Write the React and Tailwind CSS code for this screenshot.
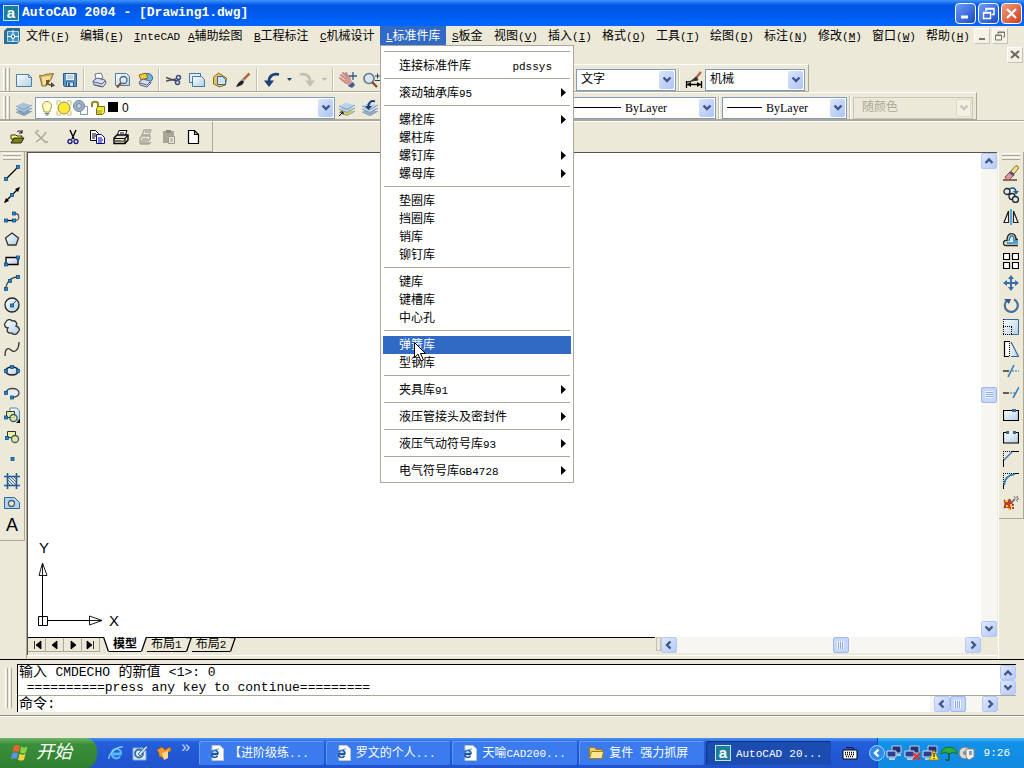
import { useState } from "react";

const menus = [
  { text: "文件", suffix: "F" },
  { text: "编辑", suffix: "E" },
  { text: "nteCAD", prefix: "I" },
  { text: "辅助绘图", prefix: "A", wide: true },
  { text: "工程标注", prefix: "B", wide: true },
  { text: "机械设计", prefix: "C", wide: true },
  { text: "标准件库", prefix: "L", wide: true, open: true },
  { text: "板金", prefix: "S", narrow: true },
  { text: "视图", suffix: "V" },
  { text: "插入", suffix: "I" },
  { text: "格式", suffix: "O" },
  { text: "工具", suffix: "T" },
  { text: "绘图", suffix: "D" },
  { text: "标注", suffix: "N" },
  { text: "修改", suffix: "M" },
  { text: "窗口", suffix: "W" },
  { text: "帮助", suffix: "H" },
];

const libraryGroups = [
  [{ text: "连接标准件库", hint: "pdssys" }],
  [{ text: "滚动轴承库95", sub: true }],
  [
    { text: "螺栓库", sub: true },
    { text: "螺柱库" },
    { text: "螺钉库", sub: true },
    { text: "螺母库", sub: true },
  ],
  [{ text: "垫圈库" }, { text: "挡圈库" }, { text: "销库" }, { text: "铆钉库" }],
  [{ text: "键库" }, { text: "键槽库" }, { text: "中心孔" }],
  [{ text: "弹簧库", active: true }, { text: "型钢库" }],
  [{ text: "夹具库91", sub: true }],
  [{ text: "液压管接头及密封件", sub: true }],
  [{ text: "液压气动符号库93", sub: true }],
  [{ text: "电气符号库GB4728", sub: true }],
];

// Latin runs are set one size smaller so they sit well beside the Chinese glyphs
function T({ children }) {
  return children.split(/([\x21-\x7e]+)/).map((part, i) =>
    i % 2 ? (
      <span key={i} className="text-[11px]">
        {part}
      </span>
    ) : (
      part
    )
  );
}

function Svg({ w = 16, h = 16, children }) {
  return (
    <svg width={w} height={h} viewBox={`0 0 ${w} ${h}`} fill="none" className="shrink-0" aria-hidden="true">
      {children}
    </svg>
  );
}

const Dot = ({ x, y }) => (
  <rect x={x - 1.5} y={y - 1.5} width="3" height="3" fill="#2288cc" stroke="#0d4f86" strokeWidth="0.8" />
);

const Chevron = ({ dir = "down", color = "#3f5687" }) => {
  const paths = {
    down: "M1.5 2.5 5 6 8.5 2.5",
    up: "M1.5 7 5 3.5 8.5 7",
    left: "M6.5 1.5 3 5 6.5 8.5",
    right: "M3.5 1.5 7 5 3.5 8.5",
  };
  return (
    <Svg w={10} h={10}>
      <path d={paths[dir]} stroke={color} strokeWidth="2.4" />
    </Svg>
  );
};

/* ---------- standard toolbar icons ---------- */

const PaperIcon = () => (
  <Svg w={18}>
    <path d="M1.5 2.5h12l3 3v9h-15z" fill="url(#paper)" stroke="#4d7fa8" />
    <path d="M13.5 2.5v3h3" stroke="#4d7fa8" strokeWidth="0.8" />
  </Svg>
);
const OpenIcon = () => (
  <Svg w={18}>
    <path d="M1.500 3.500h4l1-1 9-1-2.500 6-5 6.500H4z" fill="#d9b45a" stroke="#8a7436" />
    <path d="m4 5 9-1-4 9H5z" fill="#f3e2a4" />
    <path d="M9 8c-1 4 2 5 5 5M8 13l3-5" stroke="#6b5322" strokeWidth="1.600" />
    <path d="m13 10 4 3.500-4 2z" fill="#4a4436" />
  </Svg>
);
const SaveIcon = () => (
  <Svg>
    <path d="M1.5 1.5h13v13h-12l-1-1z" fill="#5b93c2" stroke="#2b5c8c" />
    <path d="M4 2h8v6H4z" fill="#e8f1f8" />
    <path d="M5 4h6M5 6h6" stroke="#8fb2cf" />
    <path d="M4.5 10h7v4.500h-7z" fill="#cfdfeb" stroke="#2b5c8c" />
    <path d="M6 11h2v3H6z" fill="#2b5c8c" />
  </Svg>
);
const PrintIcon = () => (
  <Svg>
    <path d="M5 8 4 2l6-1 2 5z" fill="#fff" stroke="#68789c" />
    <path d="m2 9 4-3 8 2 1 3-3 4-9-2z" fill="#d9dceb" stroke="#55618a" />
    <path d="m3 10 8 2 3-3M4 13l7 1.500" stroke="#55618a" />
  </Svg>
);
const PreviewIcon = () => (
  <Svg>
    <path d="M1.500 1.500h11l3 3v9h-14z" fill="url(#paper)" stroke="#4d7fa8" />
    <circle cx="9.500" cy="8" r="3.500" fill="#d8ecf8" stroke="#56697c" strokeWidth="1.300" />
    <path d="m7 11-4 4.500" stroke="#8c4a2b" strokeWidth="2.200" />
  </Svg>
);
const PublishIcon = () => (
  <Svg>
    <circle cx="11" cy="6" r="4.500" fill="#6fb8e2" stroke="#28669a" />
    <path d="M2 3 9 1l2 5-7 2z" fill="#f4c942" stroke="#8a6a14" />
    <path d="m2 10 4-3 7 2 1 2-4 4-7-2z" fill="#d9dceb" stroke="#55618a" />
    <path d="m3 11 7 2 3-3" stroke="#55618a" />
  </Svg>
);
const CutIcon = () => (
  <Svg>
    <path d="M0 5.500 10 9M0 9l10-2" stroke="#4a4f58" strokeWidth="1.500" />
    <circle cx="12.500" cy="5.500" r="2" stroke="#3a4c86" strokeWidth="1.500" />
    <circle cx="11.500" cy="10.500" r="2" stroke="#3a4c86" strokeWidth="1.500" />
  </Svg>
);
const CopyIcon = () => (
  <Svg>
    <path d="M.500 1.500h11v9H.500z" fill="#e3eff8" stroke="#3f7aa8" />
    <path d="M3.500 4.500h9l3 3v7h-12z" fill="url(#paper)" stroke="#3f7aa8" />
  </Svg>
);
const PasteIcon = () => (
  <Svg>
    <path d="m1.500 5 5-4 8 5-1 7-6 2-6-3z" fill="#e5c063" stroke="#8d6d22" />
    <path d="M5.500 4.500h5l3 3v5h-8z" fill="#cfe3f3" stroke="#35699a" />
  </Svg>
);
const BrushIcon = () => (
  <Svg>
    <path d="m14.500 1.500-6 6" stroke="#b06b3a" strokeWidth="2.500" />
    <path d="m9 7-3 3" stroke="#9aa0a8" strokeWidth="3" />
    <path d="M8 9c-3-1-5 2-7 6 4-1 7-2 8-5z" fill="#222" />
  </Svg>
);
const UndoIcon = ({ color = "#203f77", flip }) => (
  <Svg>
    <g transform={flip ? "translate(16 0) scale(-1 1)" : undefined}>
      <path d="M15 2.500C9 1 5 4 5 9.500" stroke={color} strokeWidth="2.800" />
      <path d="M0 8.500h10L5 15z" fill={color} />
    </g>
  </Svg>
);
const PanIcon = () => (
  <Svg w={18}>
    <path d="m2 3 6 5M1 6l6 5M4 1l6 6M7 1l4 6" stroke="#c98a86" strokeWidth="2" strokeLinecap="round" />
    <path d="m5 8 5-3 4 6-4 4z" fill="#d49a94" />
    <path d="m9 14 5-4 2 3-3 3z" fill="#3b5f95" />
    <path d="M14 0v8M10 4h8" stroke="#35598b" strokeWidth="1.300" />
  </Svg>
);
const ZoomIcon = () => (
  <Svg w={18}>
    <circle cx="7" cy="6.500" r="5" fill="#d7e6ef" stroke="#64778a" strokeWidth="1.600" />
    <path d="m10 10 5 5" stroke="#8c4a2b" strokeWidth="2.400" />
    <path d="M13 4h5M15.500 1.500v5M13 8.500h5" stroke="#26406e" />
  </Svg>
);
const DimStyleIcon = () => (
  <Svg w={18} h={18}>
    <path d="m16 1-5 6" stroke="#b06b3a" strokeWidth="2.400" />
    <path d="M11 6 5 11H1l6-1 6-1z" fill="#333" stroke="#333" />
    <path d="M1.500 10v7M16.500 10v7M2 13.500h14" stroke="#000" strokeWidth="1.300" />
    <path d="m2 13.500 4-2.500v5zM16 13.500l-4-2.500v5z" fill="#000" />
  </Svg>
);

/* ---------- layer icons ---------- */

const sheets = (top, bottom) => (
  <>
    <path d="m0 11.500 7-3.500 9 3-8 4.500z" fill={bottom} stroke="#eef3f8" strokeWidth="0.800" />
    <path d="m0 8.500 7-3.500 9 3-8 4.500z" fill={top} stroke="#eef3f8" strokeWidth="0.800" />
    <path d="M0 5.500 7 2l9 3-8 4.500z" fill={top} stroke="#eef3f8" strokeWidth="0.800" />
    <path d="m0 12 8 3.500 8-4.500M0 9l8 3.500L16 8M0 6l8 3.500L16 5" stroke="#5f7c9f" strokeWidth="0.800" />
  </>
);
const LayersIcon = () => <Svg>{sheets("#a9c2dc", "#7d9cbf")}</Svg>;
const LayerCurrentIcon = () => (
  <Svg>
    {sheets("#b9d2e8", "#e4cf35")}
    <path d="M0 16 4 12M1.500 12H4v2.500" stroke="#000" />
  </Svg>
);
const LayerPrevIcon = () => (
  <Svg>
    {sheets("#c2d4e6", "#8fa9c7")}
    <path d="M13 1.500C9 0 6 3 6.500 7" stroke="#203f77" strokeWidth="2" />
    <path d="M3 6h7l-3.500 4z" fill="#203f77" />
  </Svg>
);
const LayerStateIcons = () => (
  <span className="flex shrink-0 items-center gap-px">
    <Svg w={15}>
      <path d="M4 10C1 6 3 1.500 7 1.500S13 6 10 10v2H4z" fill="#fffbc0" stroke="#a39a3a" />
      <path d="M5 13.500h4M5.500 15h3" stroke="#6c6c6c" />
    </Svg>
    <Svg>
      <path d="M1 1h4M11 1h4v4M1 1v4M1 11v4h4M15 11v4h-4" stroke="#c9c14a" />
      <circle cx="8" cy="8" r="6" fill="#ffe93b" stroke="#8b8730" />
    </Svg>
    <Svg>
      <path d="M7.500 6.500h7v8h-7z" fill="#fff" stroke="#8198b0" />
      <circle cx="6" cy="6" r="5.500" fill="#9db3c4" stroke="#6f899e" />
      <circle cx="6" cy="6" r="2.500" fill="#c6d4de" stroke="#6f899e" />
    </Svg>
    <Svg>
      <path d="M2 7V4c0-3 6-3 6 0v4" stroke="#8f8a1a" strokeWidth="2" />
      <path d="m6.500 8.500 2-2h6v6l-2 2h-6z" fill="#f1e83c" stroke="#77730f" />
      <path d="M7 11h5M7 13h5" stroke="#a19b20" />
    </Svg>
    <Svg w={11} h={11}>
      <path d="M1 0h10v10H1z" fill="#000" />
    </Svg>
  </span>
);

/* ---------- small classic toolbar ---------- */

const classicTools = [
  {
    label: "打开图形",
    art: (
      <>
        <path d="M2 6h5l1 1h5v3H2z" fill="#ffff66" stroke="#333" />
        <path d="m2 14 3-5h10l-3 5z" fill="#808000" stroke="#222" />
        <path d="M8 3c2-2 4-1 5 1M13 1v3h-3" stroke="#000" />
      </>
    ),
  },
  { label: "删除", art: <path d="m2 3 11 11M13 3c-2 4-7 8-10 10M3 2h3M12 13h3" stroke="#aaa79a" strokeWidth="1.500" /> },
  {
    label: "剪切",
    art: (
      <>
        <path d="m5 1 4 9M11 1 7 10" stroke="#000" strokeWidth="1.400" />
        <circle cx="5" cy="12.500" r="2" stroke="#1a1a8c" strokeWidth="1.300" />
        <circle cx="11" cy="12.500" r="2" stroke="#1a1a8c" strokeWidth="1.300" />
      </>
    ),
  },
  {
    label: "复制",
    art: (
      <>
        <path d="M1.500 1.500h5l3 3v7h-8z" fill="#fff" stroke="#000" />
        <path d="M3 5h4M3 7h4M3 9h3" stroke="#000" />
        <path d="M7.500 5.500h5l3 3v6h-8z" fill="#fff" stroke="#00009c" />
        <path d="M9 9h4M9 11h5M9 13h4" stroke="#00009c" />
      </>
    ),
  },
  {
    label: "打印",
    art: (
      <>
        <path d="m4 7 2-5.500h8L12 7z" fill="#fff" stroke="#000" />
        <path d="M1 9l3-3h11v5l-3 3.500H1z" fill="#e4e0cf" stroke="#000" strokeWidth="1.400" />
        <path d="M1 9.500h11l3-3M12 9v5M2 12h9M7 4h4" stroke="#000" strokeWidth="1.200" />
        <path d="M8 11.500h2" stroke="#c8c800" />
      </>
    ),
  },
  {
    label: "打印设置",
    art: (
      <path d="M5 6 7 1h7l-2 5zM8 3h4M3 9l2-2h8v3l-2 2H3zM3 14l1 1h8l2-2M5 10h6M3 12v2h9" stroke="#aaa79a" strokeWidth="1.300" />
    ),
  },
  {
    label: "粘贴",
    art: (
      <>
        <path d="M2 2h11v12H2z" fill="#aaa79a" />
        <path d="M5 1h5v3H5z" fill="#8d8a7e" />
        <path d="M7.500 7.500h6v7h-6z" fill="#ece9d8" stroke="#9c998c" />
        <path d="M9 10h3M9 12h3" stroke="#9c998c" />
      </>
    ),
  },
  { label: "新建", art: <path d="M3.500 1.500h6l4 4v9h-10zM9.500 1.500v4h4" fill="#fff" stroke="#000" strokeWidth="1.200" /> },
];

/* ---------- draw toolbar ---------- */

const drawTools = [
  { label: "直线", art: <><path d="M2 14 14 2" stroke="#000" strokeWidth="1.300" /><Dot x={2} y={14} /><Dot x={14} y={2} /></> },
  {
    label: "构造线",
    art: (
      <>
        <path d="M1 15 15 1" stroke="#000" strokeWidth="1.300" />
        <path d="m0 16 2-5 3 3zM16 0l-2 5-3-3z" fill="#000" />
        <Dot x={8} y={8} />
      </>
    ),
  },
  {
    label: "多段线",
    art: (
      <>
        <path d="M2 11.500h9" stroke="#000" strokeWidth="1.300" />
        <path d="M11 4.500c5 0 5 7 0 7" stroke="#5a6068" strokeWidth="1.300" />
        <Dot x={2} y={11.5} /><Dot x={10} y={11.5} /><Dot x={10} y={4.5} />
      </>
    ),
  },
  { label: "正多边形", art: <path d="m8 2 6.500 5-2.500 7H4L1.500 7z" fill="url(#paper)" stroke="#333" strokeWidth="1.300" /> },
  { label: "矩形", art: <><path d="M2 4.500h12v7H2z" fill="url(#paper)" stroke="#000" strokeWidth="1.300" /><Dot x={2} y={11.5} /><Dot x={14} y={4.5} /></> },
  { label: "圆弧", art: <><path d="M2 14C2 7 7 2 14 2" stroke="#444" strokeWidth="1.300" /><Dot x={2} y={14} /><Dot x={6} y={6} /><Dot x={14} y={2} /></> },
  {
    label: "圆",
    art: (
      <>
        <circle cx="8" cy="8" r="7" fill="url(#paper)" stroke="#222" strokeWidth="1.300" />
        <path d="m8 8 4-4" stroke="#0d4f86" />
        <Dot x={8} y={8.5} />
      </>
    ),
  },
  {
    label: "修订云线",
    art: (
      <path
        d="M4 9C0 9 0 4 2 3c1-3 5-3 6-1 3-1 6 2 4 5 4 1 4 5 2 6-1 3-5 3-6 1-4 1-6-2-4-5z"
        fill="url(#paper)"
        stroke="#333"
        strokeWidth="1.300"
      />
    ),
  },
  { label: "样条曲线", art: <path d="M1 15c0-9 4-8 6-6 4 4 8-1 8-8" stroke="#333" strokeWidth="1.300" /> },
  { label: "椭圆", art: <><ellipse cx="8" cy="8" rx="6.500" ry="4" fill="url(#paper)" stroke="#222" strokeWidth="1.300" /><Dot x={2} y={8} /><Dot x={14} y={8} /><Dot x={8} y={4} /></> },
  { label: "椭圆弧", art: <><path d="M2 8c0-6 13-6 13 0 0 3-3 4-7 4.500" fill="#e3edf6" stroke="#444" strokeWidth="1.300" /><Dot x={2} y={8} /><Dot x={8} y={12.5} /></> },
  {
    label: "插入块",
    art: (
      <>
        <path d="M6 1h7l2.500 3v9H6z" fill="url(#paper)" stroke="#5a8ab4" />
        <path d="M2.500 4.500h8v6h-8z" fill="#e9eca0" stroke="#333" />
        <circle cx="9.500" cy="11" r="3.500" fill="#e4e9a8" fillOpacity="0.8" stroke="#3d5f5a" strokeWidth="1.300" />
        <path d="M16 12v4h-4z" fill="#000" />
        <Dot x={2} y={10.5} />
      </>
    ),
  },
  {
    label: "创建块",
    art: (
      <>
        <path d="M3.500 2.500h8v6h-8z" fill="#f0efa4" stroke="#333" />
        <circle cx="11" cy="10" r="3.500" fill="#e4e9a8" stroke="#3d5f5a" strokeWidth="1.300" />
        <Dot x={3} y={9} />
      </>
    ),
  },
  { label: "点", art: <Dot x={8.5} y={8} /> },
  {
    label: "图案填充",
    art: (
      <>
        <path d="M3.500 0v16M12.500 0v16M0 3.500h16M0 12.500h16" stroke="#1f5d99" strokeWidth="1.600" />
        <path d="m4 4 8 8M4 7l5 5M7 4l5 5M4 10l2 2M10 4l2 2" stroke="#3b6ca0" />
      </>
    ),
  },
  {
    label: "面域",
    art: (
      <>
        <path d="M.500 2.500h10l5 5v6H.500z" fill="#b5d3ea" stroke="#2e689c" />
        <circle cx="7.500" cy="8.500" r="3" fill="#ece9d8" stroke="#44617c" strokeWidth="1.300" />
      </>
    ),
  },
];

/* ---------- modify toolbar ---------- */

const modifyTools = [
  {
    label: "删除",
    art: (
      <>
        <path d="M0 15h14" stroke="#000" />
        <path d="m2 12 5-5 4 3-5 5H4z" fill="#e5989a" stroke="#8a4d4d" />
        <path d="m8 6 5-5.500 3 2L11 9z" fill="#f4e08a" stroke="#8a6a24" />
        <path d="m6.500 7 4.500 3.500" stroke="#3a4c86" strokeWidth="2" />
      </>
    ),
  },
  {
    label: "复制对象",
    art: (
      <>
        <circle cx="4" cy="4.500" r="3" fill="url(#paper)" stroke="#222" strokeWidth="1.300" />
        <circle cx="9" cy="9.500" r="3" fill="url(#paper)" stroke="#222" strokeWidth="1.300" />
        <circle cx="12.500" cy="12.500" r="3" fill="url(#paper)" stroke="#222" strokeWidth="1.300" />
        <path d="M6 2c4-2 6-1 7 2" stroke="#1f5d99" strokeWidth="1.600" />
        <path d="M10 4h6l-3 3.500z" fill="#1f5d99" />
      </>
    ),
  },
  {
    label: "镜像",
    art: (
      <>
        <path d="M5.500 2v11.500H1zM10.500 2v11.500H15z" fill="#fff" stroke="#222" strokeWidth="1.200" />
        <path d="M8 0v16" stroke="#2288cc" strokeWidth="1.400" />
      </>
    ),
  },
  {
    label: "偏移",
    art: (
      <>
        <path d="M15 14.500H3c-4 0-3-6 1-5 0-9 9-9 9-1h2" stroke="#222" strokeWidth="1.400" />
        <path d="M15 12H3.500M6 10c1-7 5-7 5 0h4" stroke="#2288cc" strokeWidth="1.600" />
      </>
    ),
  },
  { label: "阵列", art: <path d="M.500.500h6v6h-6zM9.500.500h6v6h-6zM.500 9.500h6v6h-6zM9.500 9.500h6v6h-6z" fill="#fff" stroke="#000" strokeWidth="1.200" /> },
  { label: "移动", art: <><path d="M8 2v12M2 8h12" stroke="#3a6ea8" strokeWidth="2" /><path d="m8 0 3 4H5zM8 16l-3-4h6zM0 8l4-3v6zM16 8l-4 3V5z" fill="#3a6ea8" /></> },
  { label: "旋转", art: <><path d="M4 3.500a6.500 6.500 0 1 0 7-1" stroke="#4a6f9e" strokeWidth="2.200" /><path d="M1 2h7l-2 5z" fill="#35598b" /></> },
  {
    label: "缩放",
    art: (
      <>
        <path d="M0 0h16v16H0z" fill="url(#paper)" />
        <path d="M1 .500h14.500V15.500H9" stroke="#35699a" />
        <path d="M.500 0v16M0 7.500h9M8.500 8v8M0 15.500h9" stroke="#000" strokeDasharray="1 1" />
      </>
    ),
  },
  {
    label: "拉伸",
    art: (
      <>
        <path d="M1 .500h5v15H1z" fill="#fff" />
        <path d="M6 .500H1.500v15H6" stroke="#000" strokeWidth="1.200" />
        <path d="m8 1 7.500 14.500H8z" fill="url(#paper)" />
        <path d="m8 1 7.500 14.500H8" stroke="#35699a" strokeWidth="1.200" />
        <path d="M6.500 0v16" stroke="#000" strokeDasharray="1 1" />
      </>
    ),
  },
  { label: "修剪", art: <><path d="M0 8h6" stroke="#000" strokeWidth="1.200" /><path d="M9 8h7" stroke="#2b78bd" strokeWidth="1.200" strokeDasharray="2 1" /><path d="m5 14 6-12" stroke="#2b78bd" strokeWidth="1.500" /></> },
  { label: "延伸", art: <><path d="M0 8h6" stroke="#000" strokeWidth="1.200" /><path d="M7 8h5" stroke="#2b78bd" strokeWidth="1.200" strokeDasharray="2 1" /><path d="m10 13 6-11" stroke="#2b78bd" strokeWidth="1.500" /></> },
  { label: "打断于点", art: <><path d="M.500 3.500h15v10H.500z" fill="url(#paper)" stroke="#000" strokeWidth="1.200" /><path d="M9 2h4v3H9z" fill="#35699a" /></> },
  { label: "打断", art: <><path d="M1 4h14v10H1z" fill="url(#paper)" /><path d="M4 3.500H.500v10.500h15V3.500H12" stroke="#000" strokeWidth="1.200" /><path d="M3 2h3v3H3zM10 2h3v3h-3z" fill="#35699a" /></> },
  { label: "倒角", art: <><path d="M.500 16V8M8 .500h8" stroke="#000" /><path d="M.500 0v8M0 .500h8" stroke="#000" strokeDasharray="1 1" /><path d="m1 9 8-8" stroke="#2b78bd" strokeWidth="1.500" /></> },
  { label: "圆角", art: <><path d="M.500 16v-5M10 .500h6" stroke="#000" /><path d="M.500 0v11M0 .500h10" stroke="#000" strokeDasharray="1 1" /><path d="M1 12C2 5 5 2 12 1" stroke="#2b78bd" strokeWidth="1.800" /></> },
  {
    label: "分解",
    art: (
      <>
        <path d="m8 8 4-4" stroke="#777" strokeWidth="2" />
        <path d="M11 1l1 2 3-2-1 2 2 1-3 1 2 2" stroke="#888" />
        <path d="m1 5 3 1 3-2 1 4 3 2-3 1-1 4-3-3-3 1 1-4z" fill="#c93a24" stroke="#7c2410" strokeWidth="0.700" />
        <path d="M2 5h3v2H2zM7 9h2v3H7zM3 10h2v2H3zM5 13h2v2H5z" fill="#f6c23e" />
        <path d="M9 12h2v2H9z" fill="#c93a24" />
      </>
    ),
  },
];

function ToolButton({ label, children, className = "w-[23px]" }) {
  return (
    <button type="button" title={label} aria-label={label} className={`flex h-[22px] shrink-0 items-center justify-center ${className}`}>
      {children}
    </button>
  );
}

const Sep = () => (
  <span className="flex w-[6px] shrink-0 justify-center self-stretch">
    <span className="w-[2px] border-l border-[#c5c2b2] border-r border-r-white" />
  </span>
);

const Grip = () => (
  <span className="flex w-3 shrink-0 gap-px self-stretch pl-[3px]">
    <span className="w-[3px] border-l border-white border-r border-r-[#aca899]" />
    <span className="w-[3px] border-l border-white border-r border-r-[#aca899]" />
  </span>
);

const DropMark = ({ color }) => (
  <span className="flex w-3 shrink-0 justify-center">
    <Svg w={5} h={3}>
      <path d="M0 0h5L2.500 3z" fill={color} />
    </Svg>
  </span>
);

function Combo({ label, value, lead, width, disabled, font = "" }) {
  return (
    <span
      className={`flex h-[22px] shrink-0 items-center border pr-px ${width} ${
        disabled ? "border-[#c9c7ba] bg-[#ece9d8]" : "border-[#7f9db9] bg-white"
      }`}
    >
      {lead}
      <select
        aria-label={label}
        disabled={disabled}
        className={`h-full min-w-0 flex-1 appearance-none bg-transparent pl-1 text-[12px] outline-none ${font} ${
          disabled ? "text-[#aca899]" : "text-black"
        }`}
      >
        <option>{value}</option>
      </select>
      <span
        className={`pointer-events-none flex h-[18px] w-[15px] shrink-0 items-center justify-center rounded-xs ${
          disabled ? "border border-[#dedbcb] bg-[#f3f1e6]" : "bg-linear-to-br from-[#dbe5fd] to-[#adc3f6]"
        }`}
      >
        <Chevron color={disabled ? "#c9c6b8" : "#3f5687"} />
      </span>
    </span>
  );
}

const LineSample = ({ width }) => (
  <span className={`ml-1 h-px shrink-0 bg-black ${width}`} />
);

function ScrollButton({ dir, label, size = "size-4" }) {
  return (
    <button
      type="button"
      aria-label={label}
      className={`flex shrink-0 items-center justify-center rounded-xs border border-[#b4c8f3] bg-linear-to-br from-[#dfe8fe] to-[#b6caf8] ${size}`}
    >
      <Chevron dir={dir} />
    </button>
  );
}

const Thumb = ({ vertical }) => (
  <span className="flex size-4 shrink-0 items-center justify-center rounded-xs border border-[#9fb7ee] bg-[#c6d6fc]">
    <Svg w={8} h={8}>
      <path
        d={vertical ? "M0 .500h8M0 2.500h8M0 4.500h8M0 6.500h8" : "M.500 0v8M2.500 0v8M4.500 0v8M6.500 0v8"}
        stroke="#f2f6ff"
      />
      <path d={vertical ? "M1 1.500h7M1 3.500h7M1 5.500h7" : "M1.500 1v7M3.500 1v7M5.500 1v7"} stroke="#8da8e8" />
    </Svg>
  </span>
);

const AcadLogo = () => (
  <span className="flex size-4 shrink-0 items-center justify-center border border-[#c6e6ee] bg-[#1f7d9c] font-['Liberation_Sans',sans-serif] text-[15px] leading-none font-bold text-white">
    <span className="pb-[2px]">a</span>
  </span>
);

function TitleBar() {
  const btn = "flex size-[21px] items-center justify-center rounded-sm border border-white";
  return (
    <header className="flex h-[26px] items-center bg-linear-to-b from-[#3d95ff] via-[#0054e3] via-20% to-[#0066ff] pr-[2px] pl-[3px] text-white">
      <AcadLogo />
      <h1 className="ml-[3px] flex-1 text-[13px] font-bold whitespace-pre">AutoCAD 2004 - [Drawing1.dwg]</h1>
      <div className="flex gap-[2px]">
        <button type="button" aria-label="最小化" className={`${btn} bg-linear-to-br from-[#6d9bf5] to-[#1c49c8]`}>
          <Svg w={13} h={13}><path d="M2 10h7" stroke="#fff" strokeWidth="3" /></Svg>
        </button>
        <button type="button" aria-label="还原" className={`${btn} bg-linear-to-br from-[#6d9bf5] to-[#1c49c8]`}>
          <Svg w={13} h={13}>
            <path d="M4 4V1.500h8v6H9.500M4 2h8M1.500 5.500h7v6h-7zM1 6h8" stroke="#fff" strokeWidth="1.400" />
          </Svg>
        </button>
        <button type="button" aria-label="关闭" className={`${btn} bg-linear-to-br from-[#f09a7c] to-[#cf3a12]`}>
          <Svg w={13} h={13}><path d="m2 2 9 9M11 2l-9 9" stroke="#fff" strokeWidth="2.200" /></Svg>
        </button>
      </div>
    </header>
  );
}

function LibraryMenu() {
  return (
    <ul role="menu" className="absolute top-full left-0 z-20 w-[194px] border border-[#aca899] bg-white px-[2px] py-[2px] text-black">
      {libraryGroups.map((group, g) => (
        <li key={g} role="none">
          <div role="separator" className="mx-px mt-[3px] mb-[5px] h-px bg-[#aca899]" />
          {group.map((item) => (
            <button
              key={item.text}
              type="button"
              role="menuitem"
              className={`relative flex h-[18px] w-full items-center pr-[5px] pl-4 text-left whitespace-nowrap ${
                item.active ? "bg-[#316ac5] text-white" : ""
              }`}
            >
              <span className="flex-1 pt-[2px]"><T>{item.text}</T></span>
              {item.hint && <span className="mr-[14px] pt-[2px] text-[11px]">{item.hint}</span>}
              {item.sub && (
                <Svg w={5} h={10}><path d="M0 0v9l5-4.500z" fill="#000" /></Svg>
              )}
              {item.active && (
                <svg width="12" height="20" viewBox="0 0 12 20" className="absolute top-[6px] left-[31px] z-10" aria-hidden="true">
                  <path d="M.500.500v15l3.500-3.300 3 6.800 2.500-1-3-6.500h5z" fill="#fff" stroke="#000" />
                </svg>
              )}
            </button>
          ))}
        </li>
      ))}
    </ul>
  );
}

function MenuBar() {
  const [open, setOpen] = useState("标准件库");
  const mdi = "flex size-4 items-center justify-center border border-white border-r-[#c5c2b2] border-b-[#c5c2b2] bg-[#f3f1e8]";
  return (
    <nav className="text-[12px] leading-none">
      <div className="flex h-[19px]">
        <span className="flex w-5 items-center justify-end">
          <Svg>
            <path d="M0 3 3 0h13v13l-3 3H0z" fill="#2b6f93" />
            <path d="M3.500 3.500h11v10h-11z" fill="#3b93c4" stroke="#a9d6ea" />
            <path d="M9 2v12M3 8.500h12" stroke="#fff" />
            <path d="M7.500 7h3v3h-3z" fill="#1c567c" stroke="#fff" />
          </Svg>
        </span>
        {menus.map((m) => (
          <div key={m.text} className={`relative ${m.wide ? "w-[66px]" : m.narrow ? "w-[42px]" : "w-[54px]"}`}>
            <button
              type="button"
              onClick={() => setOpen(open === m.text ? "" : m.text)}
              className={`h-full w-full pt-[2px] pl-[6px] text-left whitespace-nowrap ${
                open === m.text ? "bg-[#316ac5] text-white" : "text-black"
              }`}
            >
              {m.prefix && <span className="text-[11px] underline">{m.prefix}</span>}
              <T>{m.text}</T>
              {m.suffix && (
                <span className="text-[11px]">
                  (<u>{m.suffix}</u>)
                </span>
              )}
            </button>
            {m.open && open === m.text && <LibraryMenu />}
          </div>
        ))}
        <div className="flex items-center gap-[2px]">
          <button type="button" aria-label="最小化图形" className={mdi}>
            <Svg w={10} h={10}><path d="M2 8h6" stroke="#77746a" strokeWidth="2" /></Svg>
          </button>
          <button type="button" aria-label="还原图形" className={mdi}>
            <Svg w={10} h={10}><path d="M3 3V1h6.500v5H8M3 1.500h6.500M.500 4.500h6v4.500h-6zM.500 4h6" stroke="#77746a" /></Svg>
          </button>
        </div>
      </div>
      <div className="flex h-[19px] items-center justify-end pr-px">
        <button type="button" aria-label="关闭图形" className={mdi}>
          <Svg w={10} h={10}><path d="m1 1 8 7M9 1 1 8" stroke="#6c6a60" strokeWidth="2" /></Svg>
        </button>
      </div>
    </nav>
  );
}

function Toolbars() {
  const row = "flex h-7 items-center border-t border-b border-t-white border-b-[#aca899] pt-[3px]";
  return (
    <div>
      <div className="flex">
        <div className={`${row} border-r border-r-[#aca899] pr-[3px]`}>
          <Grip />
          <ToolButton label="新建"><PaperIcon /></ToolButton>
          <ToolButton label="打开"><OpenIcon /></ToolButton>
          <ToolButton label="保存"><SaveIcon /></ToolButton>
          <Sep />
          <ToolButton label="打印"><PrintIcon /></ToolButton>
          <ToolButton label="打印预览"><PreviewIcon /></ToolButton>
          <ToolButton label="发布"><PublishIcon /></ToolButton>
          <Sep />
          <ToolButton label="剪切"><CutIcon /></ToolButton>
          <ToolButton label="复制"><CopyIcon /></ToolButton>
          <ToolButton label="粘贴"><PasteIcon /></ToolButton>
          <ToolButton label="特性匹配"><BrushIcon /></ToolButton>
          <Sep />
          <ToolButton label="放弃"><UndoIcon /></ToolButton>
          <DropMark color="#203f77" />
          <ToolButton label="重做"><UndoIcon flip color="#c3c1b5" /></ToolButton>
          <DropMark color="#b9b6a8" />
          <Sep />
          <ToolButton label="实时平移"><PanIcon /></ToolButton>
          <ToolButton label="实时缩放"><ZoomIcon /></ToolButton>
          <span className="w-[194px] shrink-0" />
          <Combo label="文字样式" value="文字" width="w-[100px]" />
          <Sep />
          <ToolButton label="标注样式"><DimStyleIcon /></ToolButton>
          <Combo label="标注样式名" value="机械" width="w-[100px]" />
        </div>
      </div>
      <div className="flex">
        <div className={`${row} border-r border-r-[#aca899] pr-[3px]`}>
          <Grip />
          <ToolButton label="图层特性"><LayersIcon /></ToolButton>
          <Combo label="图层" value="0" width="w-[300px]" lead={<span className="pl-1"><LayerStateIcons /></span>} font="font-['Liberation_Sans',sans-serif]" />
          <ToolButton label="置为当前"><LayerCurrentIcon /></ToolButton>
          <ToolButton label="上一个图层"><LayerPrevIcon /></ToolButton>
          <span className="w-[178px] shrink-0" />
          <Combo label="线型" value="ByLayer" width="w-[157px]" lead={<LineSample width="w-[57px]" />} font="font-['Liberation_Serif',serif]" />
          <Sep />
          <Combo label="线宽" value="ByLayer" width="w-[125px]" lead={<LineSample width="w-[35px]" />} font="font-['Liberation_Serif',serif]" />
          <Sep />
          <Combo label="打印样式" value="随颜色" width="w-[120px]" disabled lead={<span className="w-1" />} />
        </div>
      </div>
      <div className="flex border-t border-[#aca899]">
        <div className="flex h-[31px] items-center border-t border-r border-b border-t-white border-r-[#aca899] border-b-[#aca899] pr-[7px] pl-[5px]">
          {classicTools.map((tool, i) => (
            <ToolButton key={i} label={tool.label} className={i === 2 ? "ml-2 w-6" : "w-6"}>
              <Svg>{tool.art}</Svg>
            </ToolButton>
          ))}
        </div>
        <div className="flex-1 border-t border-white" />
      </div>
    </div>
  );
}

function SideToolbar({ tools, children }) {
  return (
    <div className="flex w-[25px] shrink-0 flex-col self-start border-r border-b border-[#aca899] pb-1">
      <span className="flex h-[10px] flex-col gap-px px-[3px] pt-px">
        <span className="h-[3px] border-t border-white border-b border-b-[#aca899]" />
        <span className="h-[3px] border-t border-white border-b border-b-[#aca899]" />
      </span>
      {tools.map((tool) => (
        <ToolButton key={tool.label} label={tool.label} className="w-6">
          <Svg>{tool.art}</Svg>
        </ToolButton>
      ))}
      {children}
    </div>
  );
}

const UcsIcon = () => (
  <svg width="96" height="96" viewBox="0 -6 96 96" fill="none" stroke="#000" aria-label="UCS">
    <path d="M6.500 33v51M11.500 78.500H53M2.500 74.500h9v9h-9z" />
    <path d="M6.500 21 3 33.500h8zM6.500 22v11M53.500 74v9L66 78.500zM54 78.500h12" strokeWidth="0.900" />
    <text x="3" y="11" stroke="none" fill="#000" className="font-['Liberation_Sans',sans-serif] text-[15px]">Y</text>
    <text x="73" y="84" stroke="none" fill="#000" className="font-['Liberation_Sans',sans-serif] text-[15px]">X</text>
  </svg>
);

function LayoutTabs() {
  const nav = "flex h-[14px] w-[18px] items-center justify-center border-r border-b border-[#aca899]";
  const arrows = ["M2.500 1v8M9 1v8L4 5z", "M7 1v8L2 5z", "M3 1v8l5-4z", "M7.500 1v8M1 1v8l5-4z"];
  const names = ["第一个", "上一个", "下一个", "最后一个"];
  return (
    <div className="flex h-[18px] items-start text-[12px] leading-none">
      <div className="flex border-t border-black">
        {arrows.map((d, i) => (
          <button key={i} type="button" aria-label={names[i]} className={nav}>
            <Svg w={10} h={10}><path d={d} fill="#000" stroke="#000" strokeWidth="0.800" /></Svg>
          </button>
        ))}
        <span className="w-[3px]" />
      </div>
      <Svg w={6} h={15}><path d="M0 0h6v15z" fill="#fff" /><path d="m.500 0 5 14.500" stroke="#000" strokeWidth="1.300" /></Svg>
      <button type="button" className="h-[15px] border-b border-black bg-white px-1 pt-px font-bold">模型</button>
      <Svg w={6} h={15}><path d="M0 0h6L1 15H0z" fill="#fff" /><path d="M.500 14.500 5.500 0" stroke="#000" strokeWidth="1.300" /></Svg>
      {["布局1", "布局2"].map((name) => (
        <span key={name} className="flex">
          <button type="button" className="h-[15px] border-t border-b border-black px-1"><T>{name}</T></button>
          <Svg w={6} h={15}><path d="M0 .500h6M.500 14.500 5.500 0" stroke="#000" strokeWidth="1.300" /></Svg>
        </span>
      ))}
      <span className="flex-1 border-t border-black" />
      <span className="ml-px h-[14px] w-[5px] border border-[#c5c2b2]" />
      <div className="flex w-[33%] items-center bg-[#f7f6f0]">
        <ScrollButton dir="left" label="向左滚动" />
        <span className="grow-[4]" />
        <Thumb />
        <span className="grow-[3]" />
        <ScrollButton dir="right" label="向右滚动" />
      </div>
      <span className="w-4" />
    </div>
  );
}

function Workspace() {
  return (
    <main className="flex flex-1">
      <SideToolbar tools={drawTools}>
        <ToolButton label="多行文字" className="w-6">
          <span className="font-['Liberation_Sans',sans-serif] text-[18px] leading-none">A</span>
        </ToolButton>
      </SideToolbar>
      <div className="ml-px flex min-w-0 flex-1 flex-col border-r border-l border-white border-l-[#aca899] pr-px">
        <div className="flex flex-1 border-t border-l border-[#55534a] bg-white">
          <div className="flex flex-1 items-end pb-[5px] pl-2">
            <UcsIcon />
          </div>
          <div className="flex w-4 flex-col bg-[#f7f6f0]">
            <ScrollButton dir="up" label="向上滚动" />
            <span className="flex-1" />
            <Thumb vertical />
            <span className="flex-1" />
            <ScrollButton dir="down" label="向下滚动" />
          </div>
        </div>
        <div className="border-l border-[#55534a]">
          <LayoutTabs />
        </div>
        <div className="h-1 border-t border-white" />
      </div>
      <SideToolbar tools={modifyTools} />
    </main>
  );
}

function CommandWindow() {
  return (
    <section className="border-t border-black pt-1">
      <div className="flex px-2 pl-[5px]">
        <span className="flex w-3 shrink-0 gap-px py-1">
          <span className="w-[3px] border-l border-white border-r border-r-[#aca899]" />
          <span className="w-[3px] border-l border-white border-r border-r-[#aca899]" />
        </span>
        <div className="min-w-0 flex-1 border-t border-l border-black">
          <div className="flex h-[31px] border-b border-[#aca899] bg-white">
            <div className="flex-1 pl-px text-[14px] leading-[15px] whitespace-pre">
              <p>输入 <span className="text-[13px]">CMDECHO</span> 的新值 <span className="text-[13px]">&lt;1&gt;: 0</span></p>
              <p className="text-[13px]"> ==========press any key to continue=========</p>
            </div>
            <div className="flex flex-col">
              <ScrollButton dir="up" label="上一行" size="h-[15px] w-4" />
              <ScrollButton dir="down" label="下一行" size="h-[15px] w-4" />
            </div>
          </div>
          <div className="flex h-4 items-center">
            <label htmlFor="command" className="h-full bg-white pl-px text-[14px] leading-4">命令:</label>
            <input id="command" className="h-full min-w-0 flex-1 bg-white pl-1 text-[13px] outline-none" />
            <div className="flex w-[68px] bg-[#f7f6f0] pl-1">
              <ScrollButton dir="left" label="命令左移" />
              <Thumb />
              <span className="flex-1" />
              <ScrollButton dir="right" label="命令右移" />
            </div>
            <span className="w-[18px]" />
          </div>
        </div>
      </div>
      <div className="h-1 border-b border-[#8f8c80]" />
    </section>
  );
}

/* ---------- taskbar ---------- */

const IeGlyph = () => (
  <Svg>
    <path d="M13.500 9.500H4c0 4 6 5 8 2M4 8.500C4 2.500 13 2.500 13 8.500z" stroke="#59b8f5" strokeWidth="2.200" />
    <path d="M1 14C0 9 9 1 15 2" stroke="#8fd2fa" strokeWidth="1.200" />
  </Svg>
);
const IePageIcon = () => (
  <Svg>
    <path d="M4 .500h8l3.500 3.500v11.500H4z" fill="#fff" stroke="#b8c4d4" />
    <path d="M10 9.500H3.500c0 3 4 4 6 1.500M3.500 8.500c0-4 6.500-4 6.500 0z" stroke="#1c57a8" strokeWidth="1.600" />
    <path d="M1 13C1 9 6 4 11 4" stroke="#4a8fd6" />
  </Svg>
);
const FolderIcon = () => (
  <Svg>
    <path d="M1.500 13.500v-11h5l1.500 2h6v9z" fill="#f2cf5e" stroke="#a27a18" />
    <path d="m1.500 13.500 2-7h12l-1.500 7z" fill="#fde892" stroke="#a27a18" />
  </Svg>
);

const tasks = [
  { text: "【进阶级练...", icon: <IePageIcon /> },
  { text: "罗文的个人...", icon: <IePageIcon /> },
  { text: "天喻CAD200...", icon: <IePageIcon /> },
  { text: "复件 强力抓屏", icon: <FolderIcon /> },
  { text: "AutoCAD 20...", icon: <AcadLogo />, active: true },
];

const Monitors = ({ children }) => (
  <Svg w={18}>
    <path d="M6 1h9v7H6z" fill="#23337a" stroke="#c7cde0" />
    <path d="M1 6h9v6H1z" fill="#2b3f92" stroke="#dfe3ef" />
    <path d="M3 14h6M11 10h4" stroke="#dfe3ef" strokeWidth="1.500" />
    {children}
  </Svg>
);

function Taskbar() {
  return (
    <footer className="flex h-[30px] items-stretch bg-linear-to-b from-[#4a93f5] via-[#245edb] via-15% to-[#1f53cc] text-[12px] text-white">
      <button
        type="button"
        className="flex w-[97px] shrink-0 items-center gap-[6px] rounded-r-xl bg-linear-to-b from-[#6fb86a] via-[#3c8f3a] via-20% to-[#2f7f30] pl-[10px]"
      >
        <Svg w={20} h={20}>
          <path d="M4 3c2-1.500 4-1 6 0L8.500 9c-2-1-4-1-6 0z" fill="#f0632b" />
          <path d="M11 3.500c2 1 4 1.500 6.500 0L16 9.500c-2 1.500-4 1-6 0z" fill="#8cd046" />
          <path d="M2.200 10.200c2-1 4-1 6 0L6.700 16c-2-1-4-1-6 0z" fill="#5a93ee" />
          <path d="M9.500 10.700c2 1 4 1.500 6 0L14 16.700c-2 1.300-4 1-6 0z" fill="#f8d23c" />
        </Svg>
        <span className="text-[18px] leading-none italic">开始</span>
      </button>
      <div className="flex w-[102px] shrink-0 items-center gap-2 pl-[11px]">
        <a href="#ie" aria-label="Internet Explorer"><IeGlyph /></a>
        <a href="#desktop" aria-label="显示桌面">
          <Svg>
            <path d="M1 3h10l3 3v9H1z" fill="#dcebf7" stroke="#7fa8cf" />
            <circle cx="7" cy="8.500" r="4" stroke="#2f6cb0" strokeWidth="1.800" />
            <path d="m6 9 8-8 2 1-8 9z" fill="#cfe2f2" stroke="#33557c" strokeWidth="0.800" />
          </Svg>
        </a>
        <a href="#player" aria-label="播放器">
          <Svg>
            <path d="m1 5 5-3 3 3 5-3 1 4-5 2v6l-7-3V8z" fill="#f79a2e" stroke="#a85a10" strokeWidth="0.700" />
            <path d="m6 8 6-2v7l-4 2z" fill="#ffd68a" />
          </Svg>
        </a>
        <span className="self-start pt-[2px] pl-px text-[16px] leading-none text-[#b8d4ff]">»</span>
      </div>
      <div className="flex min-w-0 flex-1 gap-[2px] py-[3px]">
        {tasks.map((t) => (
          <button
            key={t.text}
            type="button"
            className={`flex min-w-0 flex-1 items-center gap-[5px] rounded-xs pl-[9px] whitespace-nowrap ${
              t.active
                ? "bg-[#1c4cb0] shadow-[inset_1px_1px_1px_#12347f]"
                : "bg-[#3b7bee] shadow-[inset_1px_1px_0_#5f9bf8]"
            }`}
          >
            {t.icon}
            <span className="truncate pt-[2px]"><T>{t.text}</T></span>
          </button>
        ))}
      </div>
      <div className="flex w-[38px] shrink-0 items-center justify-center">
        <Svg w={16} h={14}>
          <path d="M4 1c2 2 5-1 8 2" stroke="#000" />
          <path d="M1 4h14v9H1z" fill="#fff" stroke="#000" />
          <path d="M3 6.500h10M3 8.500h10M4 10.500h8" stroke="#000" strokeDasharray="1 1" strokeWidth="1.300" />
        </Svg>
      </div>
      <button type="button" aria-label="显示隐藏的图标" className="z-10 -mr-2 flex size-4 shrink-0 items-center justify-center self-center rounded-full border border-[#9fd2fa] bg-[#2f8cea]">
        <Chevron dir="left" color="#fff" />
      </button>
      <div className="flex items-center border-l border-[#0b4fa8] bg-linear-to-b from-[#4ab7f7] via-[#1290e8] via-15% to-[#118ae0] pr-[14px] pl-2">
        <Monitors />
        <Monitors><path d="m9 8 7 7M16 8l-7 7" stroke="#e03028" strokeWidth="2" /></Monitors>
        <Monitors>
          <path d="m12 5 5 10H7z" fill="#ffe23a" stroke="#8a7410" strokeWidth="0.800" />
          <path d="M12 8v4M12 13v1" stroke="#000" />
        </Monitors>
        <Svg w={18}>
          <path d="M1 9C1 0 17 0 17 9l-4-2-4 2-4-2z" fill="#2fae3c" stroke="#0f6e22" />
          <path d="M9 8v6c0 2-3 2-3 0" stroke="#164d24" strokeWidth="1.300" />
        </Svg>
        <Svg w={18}>
          <circle cx="7" cy="8" r="6" fill="#d8d8d8" stroke="#777" />
          <circle cx="7" cy="8" r="2" fill="#888" />
          <path d="M8 4h8v8l-5 3-3-3z" fill="#f1f1f1" stroke="#8a8a8a" />
          <path d="M11 6h3v4h-3z" fill="#9a9a9a" />
        </Svg>
        <time className="pl-2 text-[11px]">9:26</time>
      </div>
    </footer>
  );
}

export default function App() {
  return (
    <div className="flex min-h-screen flex-col overflow-hidden bg-[#ece9d8] font-['Liberation_Mono','Noto_Sans_CJK_SC',monospace] text-[12px] text-black">
      <svg width="0" height="0" className="absolute" aria-hidden="true">
        <linearGradient id="paper" x1="0" y1="0" x2="1" y2="1">
          <stop offset="0" stopColor="#fdfeff" />
          <stop offset="1" stopColor="#b3cfe6" />
        </linearGradient>
      </svg>
      <TitleBar />
      <MenuBar />
      <Toolbars />
      <Workspace />
      <CommandWindow />
      <div className="h-[22px] border-t border-white bg-[#eae7d6]" />
      <Taskbar />
    </div>
  );
}
